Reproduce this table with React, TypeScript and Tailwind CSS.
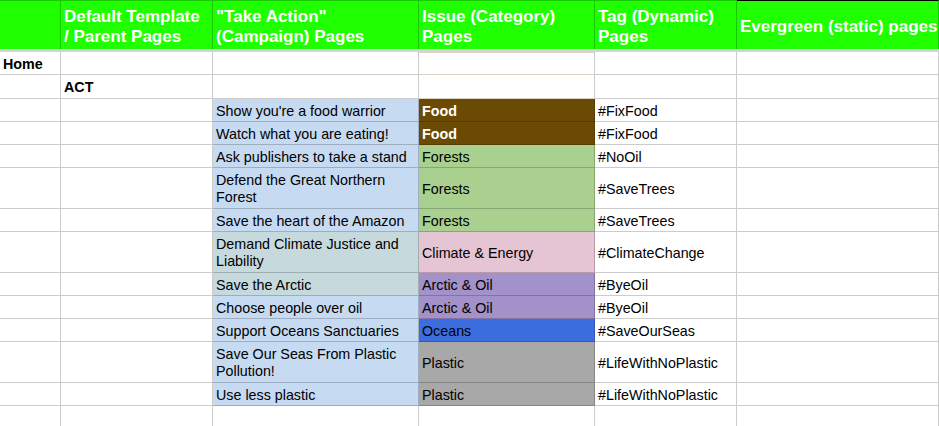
import React from 'react';

const grid = 'grid grid-cols-[61px_152px_206px_176px_142px_1fr]';

type Row = {
  h: string;
  home?: string;
  parent?: string;
  action?: string;
  actionBg?: string;
  issue?: string;
  issueBg?: string;
  issueText?: string;
  tag?: string;
};

const headers = [
  '',
  'Default Template\n/ Parent Pages',
  '"Take Action"\n(Campaign) Pages',
  'Issue (Category)\nPages',
  'Tag (Dynamic)\nPages',
  'Evergreen (static) pages',
];

const blue = 'bg-[#c6daf1]';
const teal = 'bg-[#c6d9dd]';

const rows: Row[] = [
  { h: 'h-[23px]', home: 'Home' },
  { h: 'h-[24px]', parent: 'ACT' },
  { h: 'h-[23px]', action: "Show you're a food warrior", actionBg: blue, issue: 'Food', issueBg: 'bg-[#6b4b03]', issueText: 'text-white font-bold', tag: '#FixFood' },
  { h: 'h-[23px]', action: 'Watch what you are eating!', actionBg: blue, issue: 'Food', issueBg: 'bg-[#6b4b03]', issueText: 'text-white font-bold', tag: '#FixFood' },
  { h: 'h-[23px]', action: 'Ask publishers to take a stand', actionBg: blue, issue: 'Forests', issueBg: 'bg-[#a9d08f]', tag: '#NoOil' },
  { h: 'h-[41px]', action: 'Defend the Great Northern\nForest', actionBg: blue, issue: 'Forests', issueBg: 'bg-[#a9d08f]', tag: '#SaveTrees' },
  { h: 'h-[23px]', action: 'Save the heart of the Amazon', actionBg: blue, issue: 'Forests', issueBg: 'bg-[#a9d08f]', tag: '#SaveTrees' },
  { h: 'h-[41px]', action: 'Demand Climate Justice and\nLiability', actionBg: teal, issue: 'Climate & Energy', issueBg: 'bg-[#e5c4d3]', tag: '#ClimateChange' },
  { h: 'h-[23px]', action: 'Save the Arctic', actionBg: teal, issue: 'Arctic & Oil', issueBg: 'bg-[#a391ca]', tag: '#ByeOil' },
  { h: 'h-[23px]', action: 'Choose people over oil', actionBg: blue, issue: 'Arctic & Oil', issueBg: 'bg-[#a391ca]', tag: '#ByeOil' },
  { h: 'h-[23px]', action: 'Support Oceans Sanctuaries', actionBg: blue, issue: 'Oceans', issueBg: 'bg-[#3d6ee0]', tag: '#SaveOurSeas' },
  { h: 'h-[41px]', action: 'Save Our Seas From Plastic\nPollution!', actionBg: blue, issue: 'Plastic', issueBg: 'bg-[#a8a8a8]', tag: '#LifeWithNoPlastic' },
  { h: 'h-[23px]', action: 'Use less plastic', actionBg: blue, issue: 'Plastic', issueBg: 'bg-[#a8a8a8]', tag: '#LifeWithNoPlastic' },
  { h: 'h-[23px]' },
];

function Cell({ children, className = '' }: { children?: React.ReactNode; className?: string }) {
  return (
    <div className={`flex items-center overflow-hidden whitespace-pre-line border-r border-b border-black/20 pl-[3px] pt-[2px] ${className}`}>
      {children}
    </div>
  );
}

export default function App() {
  return (
    <div className="h-[426px] w-[939px] overflow-hidden bg-white font-['Liberation_Sans',Arial,sans-serif] text-[14.3px] leading-[17px] text-black">
      {/* Header */}
      <div className={grid}>
        {headers.map((h, i) => (
          <div
            key={i}
            className={`flex h-[49px] items-center overflow-hidden whitespace-pre border-r border-t border-[#17c900] bg-[#20ff00] pl-[3px] pt-[3px] text-[17px] font-bold leading-[20px] text-white ${
              i === 5 ? 'border-t-black' : ''
            }`}
          >
            {h}
          </div>
        ))}
      </div>
      <div className="h-[3px] bg-[#d0d5dd]" />

      {/* Body */}
      {rows.map((r, i) => (
        <div key={i} className={`${grid} ${r.h}`}>
          <Cell className="pl-0 font-bold">{r.home}</Cell>
          <Cell className="font-bold">{r.parent}</Cell>
          <Cell className={r.actionBg ?? ''}>{r.action}</Cell>
          <Cell
            className={`${r.issueBg ?? ''} ${r.issueText ?? ''} ${
              i < 2 ? 'border-b-[#ddd3c2]' : ''
            } ${i === 0 ? 'shadow-[inset_0_1px_0_#ddd3c2]' : ''}`}
          >
            {r.issue}
          </Cell>
          <Cell>{r.tag}</Cell>
          <Cell />
        </div>
      ))}
    </div>
  );
}
